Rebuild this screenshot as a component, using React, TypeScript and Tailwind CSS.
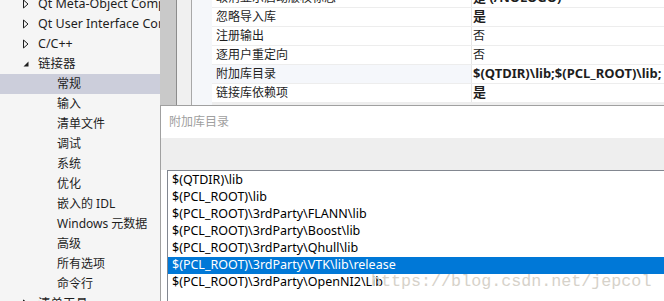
import React from 'react';

const FONT = '"Noto Sans", "Noto Sans CJK SC", sans-serif';

type TreeItem = { label: string; level: 0 | 1; state?: 'open' | 'closed'; selected?: boolean };

const TREE: TreeItem[] = [
  { label: 'Qt Meta-Object Compiler', level: 0, state: 'closed' },
  { label: 'Qt User Interface Compiler', level: 0, state: 'closed' },
  { label: 'C/C++', level: 0, state: 'closed' },
  { label: '链接器', level: 0, state: 'open' },
  { label: '常规', level: 1, selected: true },
  { label: '输入', level: 1 },
  { label: '清单文件', level: 1 },
  { label: '调试', level: 1 },
  { label: '系统', level: 1 },
  { label: '优化', level: 1 },
  { label: '嵌入的 IDL', level: 1 },
  { label: 'Windows 元数据', level: 1 },
  { label: '高级', level: 1 },
  { label: '所有选项', level: 1 },
  { label: '命令行', level: 1 },
  { label: '清单工具', level: 0, state: 'closed' },
];

const PROPS: { name: string; value: string; bold?: boolean; active?: boolean }[] = [
  { name: '取消显示启动版权标志', value: '是 (/NOLOGO)', bold: true },
  { name: '忽略导入库', value: '是', bold: true },
  { name: '注册输出', value: '否' },
  { name: '逐用户重定向', value: '否' },
  { name: '附加库目录', value: '$(QTDIR)\\lib;$(PCL_ROOT)\\lib;', bold: true, active: true },
  { name: '链接库依赖项', value: '是', bold: true },
];

const DIRS = [
  '$(QTDIR)\\lib',
  '$(PCL_ROOT)\\lib',
  '$(PCL_ROOT)\\3rdParty\\FLANN\\lib',
  '$(PCL_ROOT)\\3rdParty\\Boost\\lib',
  '$(PCL_ROOT)\\3rdParty\\Qhull\\lib',
  '$(PCL_ROOT)\\3rdParty\\VTK\\lib\\release',
  '$(PCL_ROOT)\\3rdParty\\OpenNI2\\Lib',
];

function Arrow({ state }: { state: 'open' | 'closed' }) {
  if (state === 'open') {
    return (
      <svg width="8" height="8" viewBox="0 0 8 8" className="shrink-0">
        <polygon points="6.5,1.5 6.5,6.5 1.5,6.5" fill="#1e1e1e" />
      </svg>
    );
  }
  return (
    <svg width="8" height="10" viewBox="0 0 8 10" className="shrink-0">
      <polygon points="1.5,1 6,5 1.5,9" fill="none" stroke="#1e1e1e" strokeWidth="1" />
    </svg>
  );
}

export default function App() {
  return (
    <div
      className="relative w-[664px] h-[301px] overflow-hidden flex bg-white text-[12px] text-[#1e1e1e]"
      style={{ fontFamily: FONT }}
    >
      {/* Tree of property pages */}
      <div className="w-[160px] shrink-0 bg-[#f5f5f5] overflow-hidden">
        <div className="mt-[-6px]">
          {TREE.map((it) => (
            <div
              key={it.label}
              className={`h-[20px] flex items-center whitespace-nowrap ${it.selected ? 'bg-[#cccedb]' : ''}`}
            >
              {it.level === 0 ? (
                <div className="flex items-center pl-[22px] gap-[8px]">
                  <Arrow state={it.state!} />
                  <span className="text-[12.5px]">{it.label}</span>
                </div>
              ) : (
                <span className="pl-[57px]">{it.label}</span>
              )}
            </div>
          ))}
        </div>
      </div>

      {/* Splitter and gutters */}
      <div className="w-[16px] shrink-0 bg-[#c9c9c9]" />
      <div className="w-[1px] shrink-0 bg-[#8c8c8c]" />
      <div className="w-[14px] shrink-0 bg-[#f0f0f0]" />
      <div className="w-[1px] shrink-0 bg-[#a8a8a8]" />
      <div className="w-[20px] shrink-0 bg-[#f5f7fa]" />

      {/* Property grid */}
      <div className="flex-1 min-w-0 overflow-hidden">
        <div className="mt-[-11px] bg-[#eeeeee] h-[117px]">
          {PROPS.map((p) => (
            <div key={p.name} className="h-[19px] flex border-b border-[#ededed] bg-white whitespace-nowrap">
              <div
                className={`w-[260px] shrink-0 flex items-center pl-[4px] border-r border-[#e6e6e6] ${p.active ? 'bg-[#f5f7fb]' : ''}`}
              >
                {p.name}
              </div>
              <div className={`flex-1 flex items-center pl-[1px] overflow-hidden ${p.bold ? 'font-bold text-[13px]' : ''}`}>
                {p.value}
              </div>
            </div>
          ))}
        </div>
      </div>

      {/* Dialog: 附加库目录 */}
      <div className="absolute left-[160px] top-[105px] right-0 bottom-0 border-l border-t border-[#a0a0a0] bg-white flex flex-col">
        <div className="h-[32px] shrink-0 flex items-center pl-[8px] text-[#a0a0a0]">附加库目录</div>
        <div className="h-[32px] shrink-0 bg-[#eeeeee]" />
        <div className="flex-1 ml-[6px] border-l border-t border-[#828790] pt-[1px] text-black text-[12.5px]">
          {DIRS.map((d, i) => (
            <div
              key={d}
              className={`h-[17px] flex items-center pl-[4px] whitespace-nowrap ${i === 5 ? 'bg-[#0078d7] text-white' : ''}`}
            >
              {d}
            </div>
          ))}
        </div>
      </div>

      {/* Watermark */}
      <div
        className="absolute left-[371px] top-[270px] text-[16.7px] leading-[24px] text-[#d6d2ca] whitespace-nowrap pointer-events-none"
        style={{ fontFamily: '"Liberation Mono", monospace' }}
      >
        https://blog.csdn.net/jepcol
      </div>
    </div>
  );
}
